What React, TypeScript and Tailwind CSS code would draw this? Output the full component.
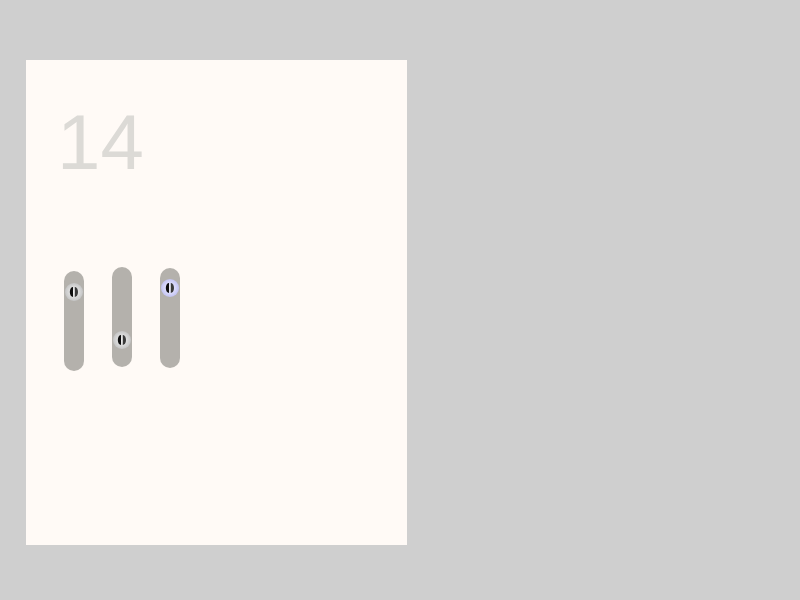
import React from "react";

function Thumb({ tint }: { tint?: boolean }) {
  const outer = tint ? "#c2c2f0" : "#c4c4c4";
  const mid = tint ? "#d8d8fa" : "#d9d9d9";
  const id = tint ? "gt" : "gg";
  return (
    <svg width="18" height="18" viewBox="0 0 18 18">
      <defs>
        <radialGradient id={id} cx="50%" cy="50%" r="50%">
          <stop offset="0%" stopColor="#f0f0f0" />
          <stop offset="60%" stopColor={mid} />
          <stop offset="100%" stopColor={outer} />
        </radialGradient>
      </defs>
      <circle cx="9" cy="9" r="9" fill={`url(#${id})`} />
      <path d="M8 4 A3.2 5 0 0 0 8 14 Z" fill="#0d0d0d" />
      <path d="M9.8 4 A3.2 5 0 0 1 9.8 14 Z" fill="#3a3a3a" />
    </svg>
  );
}

function Slider({ mt, thumbTop, tint }: { mt: string; thumbTop: string; tint?: boolean }) {
  return (
    <div className={`relative w-[20px] h-[100px] rounded-full bg-[#b4b1ac] ${mt}`}>
      <div className={`absolute left-[1px] ${thumbTop}`}>
        <Thumb tint={tint} />
      </div>
    </div>
  );
}

export default function App() {
  return (
    <div className="w-[800px] h-[600px] bg-[#cfcfcf] pt-[60px] pl-[26px]">
      <div className="w-[381px] h-[485px] bg-[#fffaf6] pt-[42px] pl-[27px]">
        <div className="font-['Liberation_Sans',Arial,sans-serif] text-[78px] leading-[80px] text-[#dcdad6] pl-[4px]">
          14
        </div>
        <div className="flex items-start gap-[28px] ml-[11px] mt-[85px]">
          <Slider mt="mt-[4px]" thumbTop="top-[12px]" />
          <Slider mt="mt-0" thumbTop="top-[64px]" />
          <Slider mt="mt-[1px]" thumbTop="top-[11px]" tint />
        </div>
      </div>
    </div>
  );
}
